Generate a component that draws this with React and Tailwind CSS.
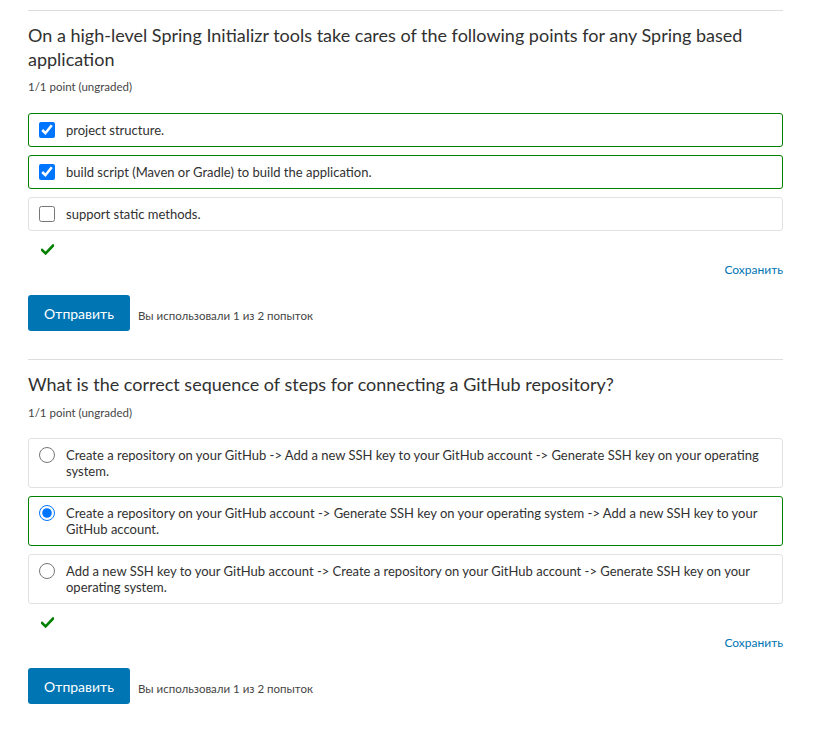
import React from "react";

function Check() {
  return (
    <svg width="13" height="11" viewBox="0 0 13 11" className="block">
      <path d="M1 6 L4.6 9.4 L12 1.6" fill="none" stroke="#008100" strokeWidth="2.6" strokeLinecap="square" />
    </svg>
  );
}

function Option({ type, checked, correct, lines }) {
  return (
    <div
      className={`flex items-start gap-[11px] rounded-[3px] border px-[10px] py-[8px] ${
        correct ? "border-[#008100]" : "border-[#e2e2e2]"
      }`}
    >
      <input
        type={type}
        checked={checked}
        readOnly
        className="m-0 mt-0 h-[16px] w-[16px] shrink-0"
      />
      <div className="text-[13px] leading-[16px] text-[#313131]">
        {lines.map((l, i) => (
          <div key={i} className="whitespace-nowrap">
            {l}
          </div>
        ))}
      </div>
    </div>
  );
}

function Footer() {
  return (
    <>
      <div className="mt-[13px] pl-[13px]">
        <Check />
      </div>
      <div className="mt-[7px] flex justify-end">
        <span className="text-[12px] leading-[16px] text-[#0075b4]">Сохранить</span>
      </div>
      <div className="mt-[17px] flex items-center">
        <button className="h-[36px] w-[102px] rounded-[3px] bg-[#0075b4] text-[14px] text-white">
          Отправить
        </button>
        <span className="ml-[8px] mt-[6px] text-[11.5px] text-[#454545]">Вы использовали 1 из 2 попыток</span>
      </div>
    </>
  );
}

export default function App() {
  return (
    <div className="min-h-[732px] w-[832px] bg-white font-['Lato',sans-serif] text-[#313131]">
      <div className="ml-[28px] w-[755px] pt-[10px]">
        <section className="border-t border-[#dddddd] pt-[12px] pb-[28px]">
          <h2 className="text-[18px] leading-[24px] font-normal text-[#313131]">
            On a high-level Spring Initializr tools take cares of the following points for any Spring based
            <br />
            application
          </h2>
          <div className="mt-[8px] text-[11.5px] leading-[16px] text-[#454545]">1/1 point (ungraded)</div>
          <div className="mt-[18px] flex flex-col gap-[8px]">
            <Option type="checkbox" checked correct lines={["project structure."]} />
            <Option type="checkbox" checked correct lines={["build script (Maven or Gradle) to build the application."]} />
            <Option type="checkbox" checked={false} lines={["support static methods."]} />
          </div>
          <Footer />
        </section>
        <section className="border-t border-[#dddddd] pt-[12px]">
          <h2 className="text-[18px] leading-[24px] font-normal text-[#313131]">
            What is the correct sequence of steps for connecting a GitHub repository?
          </h2>
          <div className="mt-[9px] text-[11.5px] leading-[16px] text-[#454545]">1/1 point (ungraded)</div>
          <div className="mt-[17px] flex flex-col gap-[8px]">
            <Option
              type="radio"
              checked={false}
              lines={[
                "Create a repository on your GitHub -> Add a new SSH key to your GitHub account -> Generate SSH key on your operating",
                "system.",
              ]}
            />
            <Option
              type="radio"
              checked
              correct
              lines={[
                "Create a repository on your GitHub account -> Generate SSH key on your operating system -> Add a new SSH key to your",
                "GitHub account.",
              ]}
            />
            <Option
              type="radio"
              checked={false}
              lines={[
                "Add a new SSH key to your GitHub account -> Create a repository on your GitHub account -> Generate SSH key on your",
                "operating system.",
              ]}
            />
          </div>
          <Footer />
        </section>
      </div>
    </div>
  );
}
